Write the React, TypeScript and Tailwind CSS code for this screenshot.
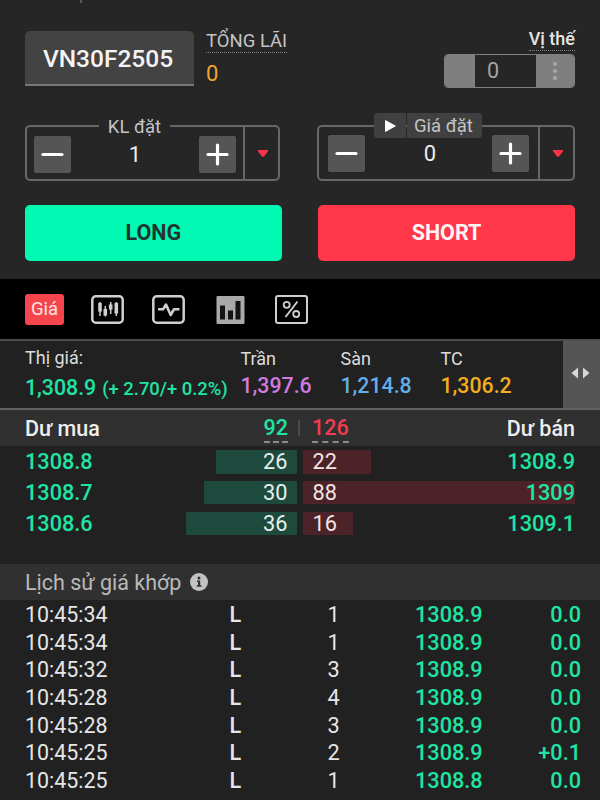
import React from "react";

const bids = [
  { price: "1308.8", vol: "26", width: 81 },
  { price: "1308.7", vol: "30", width: 93 },
  { price: "1308.6", vol: "36", width: 111.5 },
];
const asks = [
  { price: "1308.9", vol: "22", width: 68 },
  { price: "1309", vol: "88", width: 272 },
  { price: "1309.1", vol: "16", width: 50 },
];
const trades = [
  ["10:45:34", "L", "1", "1308.9", "0.0"],
  ["10:45:34", "L", "1", "1308.9", "0.0"],
  ["10:45:32", "L", "3", "1308.9", "0.0"],
  ["10:45:28", "L", "4", "1308.9", "0.0"],
  ["10:45:28", "L", "3", "1308.9", "0.0"],
  ["10:45:25", "L", "2", "1308.9", "+0.1"],
  ["10:45:25", "L", "1", "1308.8", "0.0"],
];

function StepButton({ plus = false }: { plus?: boolean }) {
  return (
    <button className="flex h-[37px] w-[37px] shrink-0 items-center justify-center rounded-[2px] bg-[#555555]">
      <svg width="23" height="23" viewBox="0 0 23 23" stroke="#ffffff" strokeWidth="3.2" strokeLinecap="round">
        <path d="M2 11.5h19" />
        {plus && <path d="M11.5 2v19" />}
      </svg>
    </button>
  );
}

function Caret() {
  return (
    <svg width="12" height="9" viewBox="0 0 12 9">
      <path d="M1.5 1h9q1.2 0.3 0.4 1.6L7.2 7.2Q6 8.4 4.8 7.2L1.1 2.6Q0.3 1.3 1.5 1z" fill="#fb3247" />
    </svg>
  );
}

function TopRow() {
  return (
    <div className="flex h-[125px] items-start pl-[25px] pr-[25px]">
      <div className="mt-[31px] flex h-[55px] w-[169px] items-center justify-center rounded-t-[5px] border-b-2 border-[#777777] bg-[#434343] pr-[3px] pt-[4px] text-[24.5px] font-medium leading-none text-[#f4f4f4]">
        VN30F2505
      </div>
      <div className="ml-[12px] mt-[29px] flex flex-col items-start">
        <div className="h-[24px] whitespace-nowrap border-b-[1.5px] border-dotted border-[#808080] text-[18.5px] leading-[24px] text-[#c4c4c4]">
          TỔNG LÃI
        </div>
        <div className="mt-[8px] text-[22px] leading-[26px] text-[#f0a52c]">0</div>
      </div>
      <div className="ml-auto mt-[27px] flex flex-col items-end">
        <div className="h-[24px] whitespace-nowrap border-b-[1.5px] border-dotted border-[#808080] text-[18px] font-medium leading-[24px] text-[#e4e4e4]">
          Vị thế
        </div>
        <div className="mt-[3px] flex h-[34px] w-[131px] overflow-hidden rounded-[4px] border-[1.5px] border-[#7f7f7f]">
          <div className="w-[30px] bg-[#7f7f7f]" />
          <div className="flex w-[61px] items-center pl-[12px] text-[21.5px] leading-none text-[#a3a3a3]">0</div>
          <div className="flex grow flex-col items-center justify-center gap-[2.5px] bg-[#7f7f7f]">
            <span className="h-[4.5px] w-[4.5px] rounded-full bg-[#a8a8a8]" />
            <span className="h-[4.5px] w-[4.5px] rounded-full bg-[#a8a8a8]" />
            <span className="h-[4.5px] w-[4.5px] rounded-full bg-[#a8a8a8]" />
          </div>
        </div>
      </div>
    </div>
  );
}

function OrderFields() {
  return (
    <div className="flex h-[80px] items-start justify-between px-[25px]">
      <div className="relative flex h-[56px] w-[255px] rounded-[5px] border-2 border-[#676767]">
        <div className="flex grow items-center justify-between pl-[7px] pr-[7px] pt-[3px]">
          <StepButton />
          <span className="text-[22px] leading-none text-[#ececec]">1</span>
          <StepButton plus />
        </div>
        <div className="flex w-[35px] items-center justify-center border-l-2 border-[#676767] pl-[3px]">
          <Caret />
        </div>
        <div className="absolute -top-[12px] left-[72px] w-[71px] bg-[#262626] text-center text-[18.5px] leading-[24px] text-[#c4c4c4]">
          KL đặt
        </div>
      </div>
      <div className="relative flex h-[56px] w-[258px] rounded-[5px] border-2 border-[#676767]">
        <div className="flex grow items-center justify-between pl-[9px] pr-[9px] pt-px">
          <StepButton />
          <span className="pl-[3px] text-[22px] leading-none text-[#ececec]">0</span>
          <StepButton plus />
        </div>
        <div className="flex w-[35px] items-center justify-center border-l-2 border-[#676767] pl-[3px]">
          <Caret />
        </div>
        <div className="absolute -top-[14px] left-[55px] flex h-[25px] gap-px">
          <div className="flex w-[32px] items-center justify-center rounded-l-[3px] bg-[#404040]">
            <svg width="11" height="12" viewBox="0 0 11 12">
              <path d="M0.5 0.6L10.3 6L0.5 11.4z" fill="#fff" stroke="#fff" strokeLinejoin="round" />
            </svg>
          </div>
          <div className="w-[75px] whitespace-nowrap rounded-r-[3px] bg-[#404040] pl-[7px] text-[18.5px] leading-[27px] text-[#c4c4c4]">
            Giá đặt
          </div>
        </div>
      </div>
    </div>
  );
}

function Tabs() {
  return (
    <div className="flex h-[60px] items-center bg-black pl-[25px]">
      <div className="flex h-[31px] w-[39px] items-center justify-center rounded-[3px] bg-[#f6454c] pt-px text-[18.5px] leading-none text-[#ffe4e4]">
        Giá
      </div>
      <svg className="ml-[27px]" width="33" height="29" viewBox="0 0 33 29" fill="none" stroke="#cfcfcf">
        <rect x="1.3" y="1.3" width="30.4" height="26.4" rx="3.5" strokeWidth="2.5" />
        <path d="M9 8v8.500M14.300 14v6.500M19.700 9.500v5M25.300 8v10.500" strokeWidth="3.600" />
        <path d="M9 7v14M14.300 11v10.500M19.700 7v12M25.300 7v14" strokeWidth="1.500" />
      </svg>
      <svg className="ml-[28px]" width="33" height="29" viewBox="0 0 33 29" fill="none" stroke="#cfcfcf">
        <rect x="1.3" y="1.3" width="30.4" height="26.4" rx="3.5" strokeWidth="2.5" />
        <path d="M6 14.200h5.200L14 9.500l4.700 10.500L22 14.200H27.500" strokeWidth="2.600" strokeLinejoin="round" />
      </svg>
      <svg className="ml-[31px]" width="29" height="29" viewBox="0 0 29 29">
        <rect x="0.500" y="1" width="28" height="28" rx="1" fill="#a9a9a9" />
        <path d="M4 10.500h5v14H4zM12 15.500h5v9h-5zM19.500 6h5v18.500h-5z" fill="#141414" />
      </svg>
      <svg className="ml-[30px]" width="33" height="29" viewBox="0 0 33 29" fill="none" stroke="#cfcfcf">
        <rect x="1" y="1" width="31" height="27" rx="2" strokeWidth="2" />
        <path d="M22.500 6.500L10.500 22" strokeWidth="2" />
        <circle cx="11.700" cy="9.800" r="3" strokeWidth="1.800" />
        <circle cx="21.200" cy="19" r="3" strokeWidth="1.800" />
      </svg>
    </div>
  );
}

function PriceStrip() {
  const cols = [
    { label: "Trần", value: "1,397.6", color: "text-[#d07be0]" },
    { label: "Sàn", value: "1,214.8", color: "text-[#63ade8]" },
    { label: "TC", value: "1,306.2", color: "text-[#f3ad1d]" },
  ];
  return (
    <div className="flex h-[71px] border-b-2 border-t-2 border-b-[#626262] border-t-[#4c4c4c] bg-[#212121]">
      <div className="w-[216px] whitespace-nowrap pl-[25px]">
        <div className="mt-[6px] text-[18px] leading-[22px] text-[#dcdcdc]">Thị giá:</div>
        <div className="mt-[7px] flex items-baseline text-[21.3px] font-medium leading-[24px] text-[#1ee5a4]">
          1,308.9<span className="ml-[6px] text-[18.4px]">(+ 2.70/+ 0.2%)</span>
        </div>
      </div>
      <div className="ml-[24.500px] flex">
        {cols.map((c) => (
          <div key={c.label} className="w-[100px]">
            <div className="mt-[7px] text-[18px] leading-[22px] text-[#dcdcdc]">{c.label}</div>
            <div className={"mt-[4px] text-[21.3px] font-medium leading-[24px] " + c.color}>{c.value}</div>
          </div>
        ))}
      </div>
      <div className="ml-auto flex w-[37px] items-center justify-center bg-[#555555] pb-[3px] pr-[2px]">
        <svg width="19" height="12" viewBox="0 0 19 12" fill="#d8d8d8">
          <path d="M7 0.500v11L0.500 6zM12 0.500v11L18.500 6z" />
        </svg>
      </div>
    </div>
  );
}

function Book() {
  return (
    <>
      <div className="flex h-[36px] items-center bg-[#303030] px-[25px] text-[21.5px] font-medium leading-none">
        <div className="flex w-[263px] items-center justify-between">
          <span className="pt-px text-[#eeeeee]">Dư mua</span>
          <span className="h-[30px] border-b-2 border-dashed border-[#8a8a8a] leading-[30px] text-[#1ee5a4]">92</span>
        </div>
        <span className="ml-[10px] h-[16px] w-[2px] bg-[#4b4b4b]" />
        <div className="ml-[12px] flex grow items-center justify-between">
          <span className="h-[30px] border-b-2 border-dashed border-[#8a8a8a] leading-[30px] text-[#f33b52]">126</span>
          <span className="pt-px text-[#eeeeee]">Dư bán</span>
        </div>
      </div>
      <div className="flex h-[118px] justify-between pl-[25px] pr-[25px] pt-[4px] text-[21.700px] leading-none">
        <div className="flex w-[272px] flex-col gap-[7.400px]">
          {bids.map((b) => (
            <div key={b.price} className="flex h-[23.500px] items-center justify-between">
              <span className="pt-px font-medium text-[#1ee5a4]">{b.price}</span>
              <span className="flex h-full items-center justify-end bg-[#1d4a3c] pr-[9.500px] pt-px text-[#e6f0ec]" style={{ width: b.width }}>
                {b.vol}
              </span>
            </div>
          ))}
        </div>
        <div className="flex w-[272px] flex-col gap-[7.400px]">
          {asks.map((a) => (
            <div key={a.price} className="flex h-[23.500px] items-center justify-between">
              <span className="-mr-[110px] flex h-full shrink-0 items-center bg-[#4b2328] pl-[9.500px] pt-px text-[#f4e4e4]" style={{ width: a.width }}>
                {a.vol}
              </span>
              <span className="relative pt-px font-medium text-[#1ee5a4]">{a.price}</span>
            </div>
          ))}
        </div>
      </div>
    </>
  );
}

function History() {
  return (
    <>
      <div className="flex h-[36px] items-center bg-[#303030] pl-[25px] text-[21.500px] leading-none text-[#b9b9b9]">
        <span className="pt-px">Lịch sử giá khớp</span>
        <svg className="ml-[9px]" width="18" height="18" viewBox="0 0 18 18">
          <circle cx="9" cy="9" r="9" fill="#c2c2c2" />
          <circle cx="9" cy="5" r="1.500" fill="#303030" />
          <path d="M7 7.500h3.200v4.700h1.300v1.600H6.700v-1.600H8V9H7z" fill="#303030" />
        </svg>
      </div>
      <div className="flex flex-col pt-px text-[21.700px]">
        {trades.map(([time, side, vol, price, diff], i) => (
          <div key={i} className="flex h-[27.700px] leading-[28px] text-[#e6e6e6]">
            <span className="w-[229.500px] pl-[25px] text-[21.400px]">{time}</span>
            <span className="w-[98px] font-medium">{side}</span>
            <span className="w-[87.500px]">{vol}</span>
            <span className="font-medium text-[#1ee5a4]">{price}</span>
            <span className="ml-auto pr-[19px] font-medium text-[#1ee5a4]">{diff}</span>
          </div>
        ))}
      </div>
    </>
  );
}

export default function App() {
  return (
    <div className="relative h-[800px] w-[600px] overflow-hidden bg-[#212121] font-['Roboto',sans-serif]">
      <div className="absolute left-[80px] top-0 h-[3px] w-[2px] bg-[#5a5a5a]" />
      <div className="h-[279px] bg-[#262626]">
        <TopRow />
        <OrderFields />
        <div className="flex justify-between px-[25px] text-[21.500px] font-bold leading-none">
          <button className="h-[56px] w-[256.500px] rounded-[5px] bg-[#00fab4] text-[#20352f]">LONG</button>
          <button className="h-[56px] w-[257px] rounded-[5px] bg-[#ff3748] text-[#fff4f4]">SHORT</button>
        </div>
      </div>
      <Tabs />
      <PriceStrip />
      <Book />
      <History />
    </div>
  );
}
